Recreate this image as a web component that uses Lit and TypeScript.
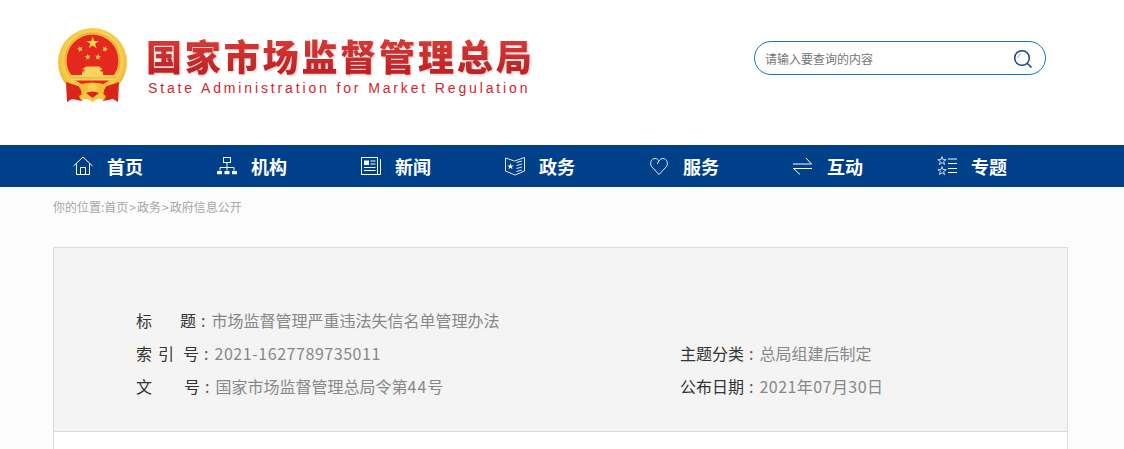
import { LitElement, html, css, svg } from "lit";
import { customElement } from "lit/decorators.js";

function star(cx: number, cy: number, r: number, rot = 0) {
  const pts: string[] = [];
  for (let i = 0; i < 10; i++) {
    const rad = i % 2 ? r * 0.382 : r;
    const a = ((-90 + rot + i * 36) * Math.PI) / 180;
    pts.push(`${(cx + rad * Math.cos(a)).toFixed(2)},${(cy + rad * Math.sin(a)).toFixed(2)}`);
  }
  return pts.join(" ");
}

const emblem = html`<svg class="emblem" width="72" height="76" viewBox="0 0 72 76">
  <defs>
    <radialGradient id="ring" cx="50%" cy="45%" r="55%">
      <stop offset="75%" stop-color="#f8cf52" />
      <stop offset="100%" stop-color="#f0b52a" />
    </radialGradient>
  </defs>
  <circle cx="35.5" cy="35.5" r="34.5" fill="url(#ring)" />
  <circle cx="35.5" cy="33.5" r="27.5" fill="none" stroke="#e2a52a" stroke-width="1" />
  <circle cx="35.5" cy="33.5" r="26" fill="#e5281d" />
  <polygon points="${star(35.7, 16, 6.6)}" fill="#fbd84a" />
  <polygon points="${star(23, 22, 3.3, -20)}" fill="#fbd84a" />
  <polygon points="${star(30.7, 30, 3.3, -10)}" fill="#fbd84a" />
  <polygon points="${star(41, 30, 3.3, 10)}" fill="#fbd84a" />
  <polygon points="${star(48, 22, 3.3, 20)}" fill="#fbd84a" />
  <path d="M29 39.5 H42 L46 42.5 H43.5 V44.5 H46 V48 H25 V44.5 H27.5 V42.5 H25 Z" fill="#f9d35e" />
  <rect x="14" y="48" width="43" height="5.5" fill="#f9d35e" />
  <rect x="14" y="50.5" width="43" height="0.8" fill="#e2a52a" />
  <path d="M9 55 L24 60 L25 74 L15 72 L10 75 Z" fill="#d9261c" />
  <path d="M62 55 L47 60 L46 74 L56 72 L61 75 Z" fill="#d9261c" />
  <path d="M21 58 Q35.5 53 50 58 L46 65 Q35.5 60 25 65 Z" fill="#f3bd35" />
  <circle cx="35.5" cy="60.5" r="4.5" fill="#f8cf52" />
  <path d="M22 69 Q35.5 60 49 69 L47 73 Q40 70 35.5 75.5 Q31 70 24 73 Z" fill="#f5c83f" />
  <path d="M29 66 Q35.5 63 42 66 L35.5 71 Z" fill="#d9261c" />
</svg>`;

const I = (body: unknown) =>
  html`<svg class="ico" width="20" height="20" viewBox="0 0 20 20" fill="none" stroke="#fff" stroke-width="1">${body}</svg>`;

const icons = {
  home: I(svg`<path d="M0.5 10 L10 1 L19.5 10" /><path d="M3.5 7.5 V18.5 H16.5 V7.5" /><path d="M7.5 18.5 V11.5 H12.5 V18.5" />`),
  org: I(svg`<rect x="6.5" y="1.5" width="7" height="5" /><path d="M10 6.5 V11.5 M3 14.5 V11.5 H17 V14.5 M10 11.5 V14.5" />
    <rect x="0" y="15" width="5" height="3.2" fill="#fff" stroke="none" /><rect x="7.5" y="15" width="5" height="3.2" fill="#fff" stroke="none" /><rect x="15" y="15" width="5" height="3.2" fill="#fff" stroke="none" />`),
  news: I(svg`<rect x="0.5" y="1.5" width="16" height="17" /><path d="M19.5 3 V18.5 H16.5" />
    <rect x="3" y="4.5" width="5" height="4.5" fill="#fff" stroke="none" /><path d="M9.5 5 H14.5 M9.5 8 H14.5 M3 11.5 H14.5 M3 14.5 H14.5" />`),
  book: I(svg`<path d="M0.5 2 L9.5 5 L19.5 1.5 V15 L10 19 L0.5 15 Z" stroke="#dfe8f3" />
    <polygon points="${star(5.5, 10.5, 3.4)}" fill="#fff" stroke="none" /><path d="M11.5 6.5 L17 5 M11.5 9.5 L17 8 M11.5 12.5 L17 11 M11.5 15.5 L17 14" stroke="#dfe8f3" />`),
  heart: I(svg`<path d="M10 18.5 L2.5 10.5 C0.5 7.5 2 2.5 6 2.5 C7.8 2.5 9 3.3 10 4.8 L8.2 8 M10 4.8 C11 3.3 12.2 2.5 14 2.5 C18 2.5 19.5 7.5 17.5 10.5 L10 18.5" stroke="#e6edf5" />`),
  swap: I(svg`<path d="M0 8 H18.5 L13 2" /><path d="M19 12.5 H0.5 L7 18.5" />`),
  list: I(svg`<polygon points="${star(5, 5, 4.4)}" stroke="#cdd9e8" /><polygon points="${star(5, 15, 4.4)}" stroke="#cdd9e8" />
    <path d="M11 3 H20 M11 7.5 H20 M11 12.5 H20 M11 16.5 H20" />`),
};

const navItems = [
  ["首页", icons.home],
  ["机构", icons.org],
  ["新闻", icons.news],
  ["政务", icons.book],
  ["服务", icons.heart],
  ["互动", icons.swap],
  ["专题", icons.list],
] as const;

@customElement("app-root")
export class AppRoot extends LitElement {
  static styles = css`
    :host {
      display: block;
      height: 449px;
      overflow: hidden;
      background: #fcfcfc;
      font-family: "Noto Sans CJK SC", "Liberation Sans", sans-serif;
    }
    .header {
      height: 145px;
      background: #fff;
      display: flex;
      align-items: flex-start;
      justify-content: space-between;
      padding: 0 78px 0 57px;
      box-sizing: border-box;
    }
    .brand {
      display: flex;
      gap: 17px;
      padding-top: 27px;
    }
    .emblem {
      display: block;
    }
    .names {
      padding-top: 6px;
    }
    .cn {
      font-size: 36px;
      line-height: 44px;
      height: 44px;
      font-weight: 900;
      letter-spacing: 2.85px;
      white-space: nowrap;
      color: transparent;
      background: linear-gradient(#da3f3a, #bd1e20);
      -webkit-background-clip: text;
      background-clip: text;
      filter: drop-shadow(1px 1px 1px rgba(170, 90, 90, 0.35));
    }
    .en {
      margin: 2px 0 0 2px;
      font-family: "Liberation Sans", sans-serif;
      font-size: 14px;
      line-height: 18px;
      letter-spacing: 2.86px;
      color: #d4262a;
      white-space: nowrap;
    }
    .search {
      margin-top: 41px;
      width: 292px;
      height: 34px;
      box-sizing: border-box;
      border: 1px solid #1a73c2;
      border-radius: 17px;
      display: flex;
      align-items: center;
      justify-content: space-between;
      padding: 0 12px 0 10px;
      background: #fff;
      font-size: 12px;
      color: #757575;
    }
    .search svg {
      display: block;
      margin-top: 2px;
    }
    .nav {
      height: 42px;
      background: #003f8a;
      display: flex;
      padding-left: 73px;
    }
    .item {
      width: 144px;
      flex: none;
      display: flex;
      align-items: center;
      gap: 14px;
      color: #fff;
      font-size: 18px;
      font-weight: 700;
    }
    .ico {
      display: block;
      flex: none;
      overflow: visible;
    }
    .crumb {
      height: 60px;
      padding: 11px 0 0 53px;
      box-sizing: border-box;
      font-size: 12px;
      line-height: 18px;
      color: #a3a7ab;
    }
    .sep {
      margin: 0 1px;
    }
    .card {
      margin: 0 56px 0 53px;
      border: 1px solid #dadfe5;
      border-bottom: none;
      background: #fff;
    }
    .head {
      height: 184px;
      box-sizing: border-box;
      background: #f4f4f4;
      border-bottom: 1px solid #d8dcdf;
      padding: 56px 0 0 82px;
    }
    .row {
      display: flex;
      height: 33px;
      line-height: 33px;
      font-size: 16px;
      color: #888;
      white-space: nowrap;
    }
    .cell {
      display: flex;
    }
    .cell.left {
      width: 544px;
    }
    .lab {
      color: #333;
      display: flex;
    }
    .colon {
      color: #555;
      margin: 0 6px 0 5px;
    }
    .g28 {
      margin-right: 28px;
    }
    .g32 {
      margin-right: 32px;
    }
    .g6 {
      margin-right: 6px;
    }
    .g9 {
      margin-right: 9px;
    }
    .num {
      letter-spacing: 0.55px;
    }
    .num2 {
      letter-spacing: 0.45px;
    }
    .wide {
      letter-spacing: 1px;
    }
    .foot {
      height: 17px;
    }
  `;

  render() {
    return html`
      <div class="header">
        <div class="brand">
          ${emblem}
          <div class="names">
            <div class="cn">国家市场监督管理总局</div>
            <div class="en">State Administration for Market Regulation</div>
          </div>
        </div>
        <div class="search">
          <span>请输入要查询的内容</span>
          <svg width="20" height="20" viewBox="0 0 20 20" fill="none" stroke="#16447f">
            <circle cx="9" cy="9" r="7.3" stroke-width="1.5" />
            <path d="M4.8 9 A4.3 4.3 0 0 1 8 4.8" stroke="#8fb0d6" stroke-width="1" />
            <path d="M14.2 14.2 L18.5 18.5" stroke-width="1.6" />
          </svg>
        </div>
      </div>
      <div class="nav">
        ${navItems.map(([t, ic]) => html`<div class="item">${ic}<span>${t}</span></div>`)}
      </div>
      <div class="crumb">你的位置:首页<span class="sep">&gt;</span>政务<span class="sep">&gt;</span>政府信息公开</div>
      <div class="card">
        <div class="head">
          <div class="row">
            <div class="cell left">
              <span class="lab"><span class="g28">标</span><span>题</span></span><span class="colon">:</span><span>市场监督管理严重违法失信名单管理办法</span>
            </div>
          </div>
          <div class="row">
            <div class="cell left">
              <span class="lab"><span class="g6">索</span><span class="g9">引</span><span>号</span></span><span class="colon">:</span><span class="num">2021-1627789735011</span>
            </div>
            <div class="cell">
              <span class="lab">主题分类</span><span class="colon">:</span><span>总局组建后制定</span>
            </div>
          </div>
          <div class="row">
            <div class="cell left">
              <span class="lab"><span class="g32">文</span><span>号</span></span><span class="colon">:</span><span>国家市场监督管理总局令第<span class="wide">44</span>号</span>
            </div>
            <div class="cell">
              <span class="lab">公布日期</span><span class="colon">:</span><span class="num2">2021年07月30日</span>
            </div>
          </div>
        </div>
        <div class="foot"></div>
      </div>
    `;
  }
}
